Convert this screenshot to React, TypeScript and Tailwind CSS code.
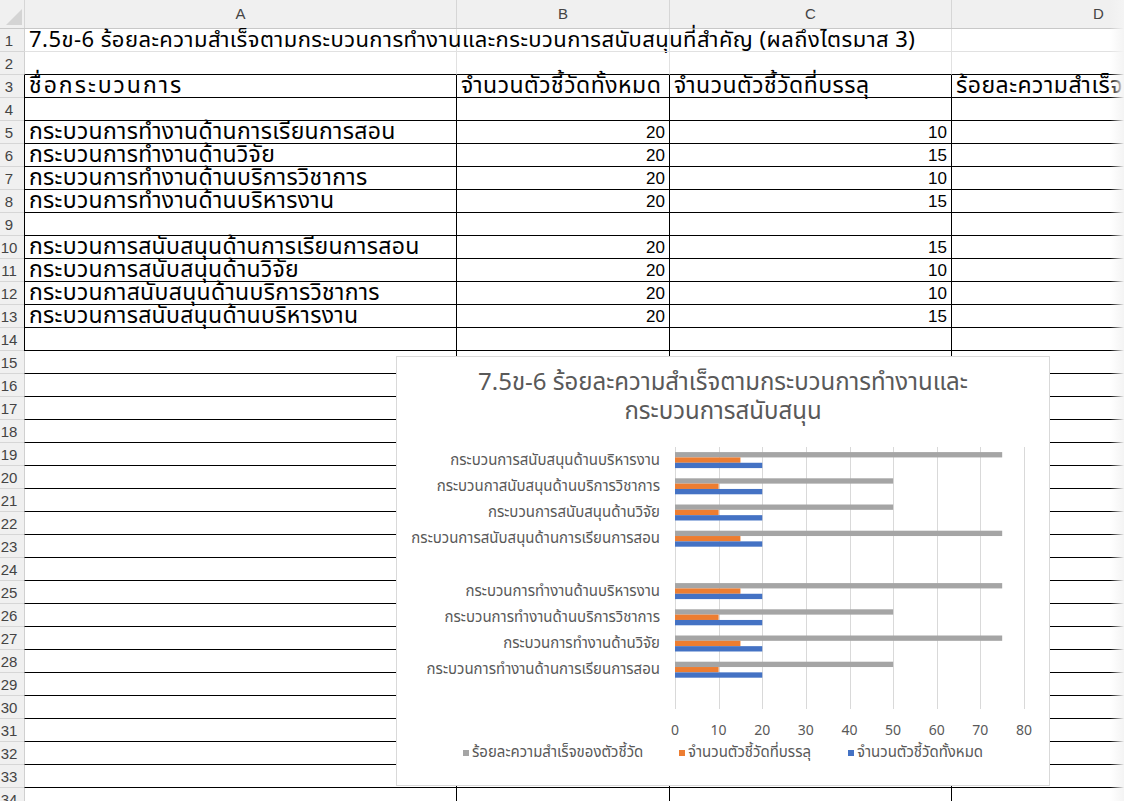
import React from "react";

const THAI = '"Noto Sans Thai", "Noto Sans Thai Looped", Tahoma, "Leelawadee UI", "Noto Sans", "DejaVu Sans", sans-serif';

const COLW = [433, 213, 282, 294];
const COLS = ["A", "B", "C", "D"];

type Row = { a?: string; b?: string; c?: string; d?: string };

const rows: Row[] = [
  { a: "7.5ข-6 ร้อยละความสำเร็จตามกระบวนการทำงานและกระบวนการสนับสนุนที่สำคัญ (ผลถึงไตรมาส 3)" },
  {},
  { a: "ชื่อกระบวนการ", b: "จำนวนตัวชี้วัดทั้งหมด", c: "จำนวนตัวชี้วัดที่บรรลุ", d: "ร้อยละความสำเร็จของตัวชี้วัด" },
  {},
  { a: "กระบวนการทำงานด้านการเรียนการสอน", b: "20", c: "10" },
  { a: "กระบวนการทำงานด้านวิจัย", b: "20", c: "15" },
  { a: "กระบวนการทำงานด้านบริการวิชาการ", b: "20", c: "10" },
  { a: "กระบวนการทำงานด้านบริหารงาน", b: "20", c: "15" },
  {},
  { a: "กระบวนการสนับสนุนด้านการเรียนการสอน", b: "20", c: "15" },
  { a: "กระบวนการสนับสนุนด้านวิจัย", b: "20", c: "10" },
  { a: "กระบวนกาสนับสนุนด้านบริการวิชาการ", b: "20", c: "10" },
  { a: "กระบวนการสนับสนุนด้านบริหารงาน", b: "20", c: "15" },
];
while (rows.length < 34) rows.push({});

function Cell({ w, rowNo, col, text }: { w: number; rowNo: number; col: number; text?: string }) {
  const bottomBlack = rowNo >= 2;
  const rightBlack = rowNo >= 3;
  const leftBorder = col === 0;
  const leftBlack = rowNo >= 3 && rowNo <= 14;
  const isNum = rowNo >= 5 && (col === 1 || col === 2);
  const isTitle = rowNo === 1;
  const isHead = rowNo === 3;
  return (
    <div
      className={
        "relative h-[23px] shrink-0 border-b " +
        (bottomBlack ? "border-b-black " : "border-b-[#e1e1e1] ") +
        (col === 3 ? "" : rightBlack ? "border-r border-r-black " : "border-r border-r-[#e1e1e1] ") +
        (leftBorder ? (leftBlack ? "border-l border-l-black " : "border-l border-l-[#d0d0d0] ") : "")
      }
      style={{ width: w }}
    >
      {text && (
        isNum ? (
          <div className="absolute right-[4px] top-0 h-[22px] leading-[24px] text-[17px] text-black whitespace-nowrap" style={{ fontFamily: '"Liberation Sans", Arial, sans-serif' }}>
            {text}
          </div>
        ) : (
          <div
            className={
              "absolute top-0 h-[22px] whitespace-nowrap text-black z-0 left-[4px] " +
              (isTitle
                ? "text-[22px] leading-[23px] tracking-[0.45px]"
                : isHead && col === 0
                ? "text-[23px] leading-[22px] tracking-[2px]"
                : isHead
                ? "text-[23px] leading-[22px] tracking-[0.5px]"
                : "text-[23px] leading-[22px] tracking-[0.3px]")
            }
            style={{ fontFamily: THAI }}
          >
            {text}
          </div>
        )
      )}
    </div>
  );
}

const chartLabels = [
  "กระบวนการสนับสนุนด้านบริหารงาน",
  "กระบวนกาสนับสนุนด้านบริการวิชาการ",
  "กระบวนการสนับสนุนด้านวิจัย",
  "กระบวนการสนับสนุนด้านการเรียนการสอน",
  "",
  "กระบวนการทำงานด้านบริหารงาน",
  "กระบวนการทำงานด้านบริการวิชาการ",
  "กระบวนการทำงานด้านวิจัย",
  "กระบวนการทำงานด้านการเรียนการสอน",
  "",
];
// values: [gray, orange, blue]
const chartVals: (number[] | null)[] = [
  [75, 15, 20],
  [50, 10, 20],
  [50, 10, 20],
  [75, 15, 20],
  null,
  [75, 15, 20],
  [50, 10, 20],
  [75, 15, 20],
  [50, 10, 20],
  null,
];

function Chart() {
  const x0 = 278;
  const pxPer = 349 / 80;
  const top = 90;
  const band = 26.2;
  const bottom = top + band * 10;
  const colors = ["#a5a5a5", "#ed7d31", "#4472c4"];
  return (
    <div className="absolute left-[396px] top-[356px] w-[654px] h-[430px] bg-white border border-[#d9d9d9] z-10">
      <div className="absolute left-0 right-0 top-[12px] text-center text-[24px] leading-[29px] text-[#595959]" style={{ fontFamily: THAI }}>
        <div>7.5ข-6 ร้อยละความสำเร็จตามกระบวนการทำงานและ</div>
        <div>กระบวนการสนับสนุน</div>
      </div>
      <svg className="absolute left-0 top-0" width="652" height="428" viewBox="0 0 652 428">
        {Array.from({ length: 9 }).map((_, i) => {
          const x = Math.round(x0 + i * 10 * pxPer) + 0.5;
          return <line key={i} x1={x} x2={x} y1={top} y2={bottom} stroke="#d9d9d9" strokeWidth={1} />;
        })}
        {chartVals.map((v, i) => {
          if (!v) return null;
          const cy = top + band * i + band / 2;
          return v.map((val, k) => (
            <rect key={i + "-" + k} x={x0} y={cy - 8 + k * 5.33} width={val * pxPer} height={5.33} fill={colors[k]} />
          ));
        })}
        {chartLabels.map((l, i) => (
          <text
            key={i}
            x={263}
            y={top + band * i + band / 2}
            textAnchor="end"
            dominantBaseline="central"
            fontSize={15}
            fill="#595959"
            style={{ fontFamily: THAI }}
          >
            {l}
          </text>
        ))}
        {Array.from({ length: 9 }).map((_, i) => (
          <text
            key={"t" + i}
            x={x0 + i * 10 * pxPer}
            y={373}
            textAnchor="middle"
            dominantBaseline="central"
            fontSize={14}
            fill="#595959"
            style={{ fontFamily: THAI }}
          >
            {i * 10}
          </text>
        ))}
      </svg>
      <div className="absolute left-0 right-0 top-[396px] flex items-center text-[15px] text-[#595959]" style={{ fontFamily: THAI }}>
        <div className="absolute left-[66px] flex items-center gap-[3px]">
          <span className="w-[6px] h-[6px] bg-[#a5a5a5]" />
          <span>ร้อยละความสำเร็จของตัวชี้วัด</span>
        </div>
        <div className="absolute left-[282px] flex items-center gap-[3px]">
          <span className="w-[6px] h-[6px] bg-[#ed7d31]" />
          <span>จำนวนตัวชี้วัดที่บรรลุ</span>
        </div>
        <div className="absolute left-[451px] flex items-center gap-[3px]">
          <span className="w-[6px] h-[6px] bg-[#4472c4]" />
          <span>จำนวนตัวชี้วัดทั้งหมด</span>
        </div>
      </div>
    </div>
  );
}

export default function App() {
  return (
    <div className="relative w-[1124px] h-[801px] overflow-hidden bg-white" style={{ fontFamily: '"Liberation Sans", Arial, sans-serif' }}>
      {/* column header */}
      <div className="flex h-[29px] bg-[#f0f0f0] border-b border-b-[#c8c8c8]">
        <div className="relative w-[24px] shrink-0">
          <div className="absolute right-[2px] bottom-[3px] w-0 h-0 border-l-[16px] border-l-transparent border-b-[16px] border-b-[#d4d4d4]" />
        </div>
        {COLS.map((c, i) => (
          <div
            key={c}
            className="shrink-0 flex items-center justify-center text-[15px] text-[#444] border-r border-r-[#d6d6d6] border-l-[#d6d6d6]"
            style={{ width: COLW[i], borderLeftWidth: i === 0 ? 1 : 0 }}
          >
            {c}
          </div>
        ))}
      </div>
      {rows.map((r, idx) => {
        const rowNo = idx + 1;
        return (
          <div key={rowNo} className="flex">
            <div className="w-[24px] h-[23px] shrink-0 bg-[#f0f0f0] border-b border-b-[#d6d6d6] relative">
              <div className="absolute left-0 w-[18px] top-0 h-[22px] leading-[24px] text-center text-[15px] text-[#444]">
                {rowNo}
              </div>
            </div>
            <Cell w={COLW[0]} rowNo={rowNo} col={0} text={r.a} />
            <Cell w={COLW[1]} rowNo={rowNo} col={1} text={r.b} />
            <Cell w={COLW[2]} rowNo={rowNo} col={2} text={r.c} />
            <Cell w={COLW[3]} rowNo={rowNo} col={3} text={r.d} />
          </div>
        );
      })}
      <Chart />
      <div className="absolute right-0 top-0 w-[14px] h-full bg-gradient-to-r from-transparent to-[#f4f4f4]" />
    </div>
  );
}
